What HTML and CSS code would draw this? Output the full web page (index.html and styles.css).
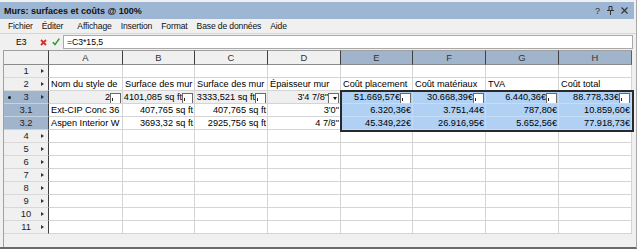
FILE: index.html
```html
<!DOCTYPE html>
<html lang="fr">
<head>
    <meta charset="UTF-8">
    <title>Murs: surfaces et coûts</title>
    <link rel="stylesheet" href="styles.css">
</head>
<body>
<div class="window">
    <div class="titlebar">
        <span class="title">Murs: surfaces et coûts @ 100%</span>
        <span class="tools">
            <span class="help">?</span>
            <svg class="pin" width="7" height="9" viewBox="0 0 7 9">
                <path d="M2 0.5h3v4h-3z M0 4.5h7 M3.5 4.5v4.5" fill="none" stroke="#333" stroke-width="1"/>
            </svg>
            <svg class="close" width="7" height="7" viewBox="0 0 7 7">
                <path d="M0.5 0.5l6 6 M6.5 0.5l-6 6" stroke="#333" stroke-width="1.1"/>
            </svg>
        </span>
    </div>
    <ul class="menubar">
        <li>Fichier</li>
        <li class="wide">Éditer</li>
        <li>Affichage</li>
        <li>Insertion</li>
        <li>Format</li>
        <li>Base de données</li>
        <li>Aide</li>
    </ul>
    <div class="formula">
        <span class="ref">E3</span>
        <svg class="cancel" width="7" height="7" viewBox="0 0 7 7">
            <path d="M1 1l5 5 M6 1l-5 5" stroke="#d3312a" stroke-width="1.8"/>
        </svg>
        <svg class="ok" width="8" height="8" viewBox="0 0 8 8">
            <path d="M0.8 4.2l2.2 2.4 4.3-6" fill="none" stroke="#2f9a2f" stroke-width="1.6"/>
        </svg>
        <div class="input">=C3*15,5</div>
    </div>
    <div class="sheet-wrap">
        <div class="sheet">
            <div class="ch corner"></div>
            <div class="ch">A</div>
            <div class="ch">B</div>
            <div class="ch">C</div>
            <div class="ch">D</div>
            <div class="ch sel">E</div>
            <div class="ch sel">F</div>
            <div class="ch sel">G</div>
            <div class="ch sel last">H</div>

            <div class="rh">1</div>
            <div class="c"></div><div class="c"></div><div class="c"></div><div class="c"></div>
            <div class="c"></div><div class="c"></div><div class="c"></div><div class="c"></div>

            <div class="rh">2</div>
            <div class="c">Nom du style de</div>
            <div class="c">Surface des mur</div>
            <div class="c">Surface des mur</div>
            <div class="c">Épaisseur mur</div>
            <div class="c">Coût placement</div>
            <div class="c">Coût matériaux</div>
            <div class="c">TVA</div>
            <div class="c">Coût total</div>

            <div class="rh sel current">3</div>
            <div class="c num sum box">2</div>
            <div class="c num sum box">4101,085 sq ft</div>
            <div class="c num sum box">3333,521 sq ft</div>
            <div class="c num sum box drop">3'4 7/8"</div>
            <div class="c num hi box">51.669,57€</div>
            <div class="c num hi box">30.668,39€</div>
            <div class="c num hi box">6.440,36€</div>
            <div class="c num hi box">88.778,33€</div>

            <div class="rh sel sub">3.1</div>
            <div class="c">Ext-CIP Conc 36</div>
            <div class="c num">407,765 sq ft</div>
            <div class="c num">407,765 sq ft</div>
            <div class="c num">3'0"</div>
            <div class="c num hi">6.320,36€</div>
            <div class="c num hi">3.751,44€</div>
            <div class="c num hi">787,80€</div>
            <div class="c num hi">10.859,60€</div>

            <div class="rh sel sub">3.2</div>
            <div class="c">Aspen Interior W</div>
            <div class="c num">3693,32 sq ft</div>
            <div class="c num">2925,756 sq ft</div>
            <div class="c num">4 7/8"</div>
            <div class="c num hi">45.349,22€</div>
            <div class="c num hi">26.916,95€</div>
            <div class="c num hi">5.652,56€</div>
            <div class="c num hi">77.918,73€</div>

            <div class="rh">4</div>
            <div class="c"></div><div class="c"></div><div class="c"></div><div class="c"></div>
            <div class="c"></div><div class="c"></div><div class="c"></div><div class="c"></div>
            <div class="rh">5</div>
            <div class="c"></div><div class="c"></div><div class="c"></div><div class="c"></div>
            <div class="c"></div><div class="c"></div><div class="c"></div><div class="c"></div>
            <div class="rh">6</div>
            <div class="c"></div><div class="c"></div><div class="c"></div><div class="c"></div>
            <div class="c"></div><div class="c"></div><div class="c"></div><div class="c"></div>
            <div class="rh">7</div>
            <div class="c"></div><div class="c"></div><div class="c"></div><div class="c"></div>
            <div class="c"></div><div class="c"></div><div class="c"></div><div class="c"></div>
            <div class="rh">8</div>
            <div class="c"></div><div class="c"></div><div class="c"></div><div class="c"></div>
            <div class="c"></div><div class="c"></div><div class="c"></div><div class="c"></div>
            <div class="rh">9</div>
            <div class="c"></div><div class="c"></div><div class="c"></div><div class="c"></div>
            <div class="c"></div><div class="c"></div><div class="c"></div><div class="c"></div>
            <div class="rh">10</div>
            <div class="c"></div><div class="c"></div><div class="c"></div><div class="c"></div>
            <div class="c"></div><div class="c"></div><div class="c"></div><div class="c"></div>
            <div class="rh">11</div>
            <div class="c"></div><div class="c"></div><div class="c"></div><div class="c"></div>
            <div class="c"></div><div class="c"></div><div class="c"></div><div class="c"></div>

            <div class="selection"></div>
        </div>
    </div>
</div>
</body>
</html>
```

FILE: styles.css
```css
* {
    padding: 0;
    margin: 0;
    box-sizing: border-box;
}

ul {
    list-style: none;
}

body {
    background: #ffffff;
    font-family: "Liberation Sans", Arial, sans-serif;
    color: #000;
}

.window {
    width: 637px;
    height: 249px;
    padding-top: 2px;
    background: #f0f0f0;
    border-right: 1px solid #a8a8a8;
    border-bottom: 2px solid #6a6a6a;
    display: flex;
    flex-direction: column;
}

.titlebar {
    height: 17px;
    margin-right: 2px;
    background: #9db6d3;
    display: flex;
    align-items: center;
    justify-content: space-between;
    padding: 0 6px 0 4px;
}

.titlebar .title {
    font-size: 9px;
    font-weight: bold;
    color: #111;
}

.titlebar .tools {
    display: flex;
    align-items: center;
    gap: 7px;
    font-size: 9px;
    color: #333;
}

.menubar {
    height: 15px;
    display: flex;
    align-items: center;
    gap: 9px;
    padding-left: 8px;
    font-size: 8.6px;
    letter-spacing: -0.15px;
    color: #111;
    border-bottom: 1px solid #d6d6d6;
}

.menubar .wide {
    margin-right: 5px;
}

.formula {
    height: 16px;
    display: flex;
    align-items: center;
    padding-right: 3px;
}

.formula .ref {
    width: 40px;
    padding-left: 16px;
    font-size: 8.6px;
}

.formula .ok {
    margin-left: 5px;
}

.formula .input {
    flex: 1;
    height: 14px;
    margin-left: 3px;
    background: #fff;
    border: 1px solid #a9a9a9;
    font-size: 8.6px;
    line-height: 12px;
    padding-left: 3px;
}

.sheet-wrap {
    flex: 1;
    margin-left: 3px;
    border-left: 1px solid #a0a0a0;
}

.sheet {
    position: relative;
    display: grid;
    grid-template-columns: 45px 74px 72px 73px 73px 72px 73px 73px 73px;
    grid-template-rows: 15px;
    grid-auto-rows: 13px;
    width: 628px;
    background: #fff;
    font-size: 9.2px;
}

.ch {
    background: #f0f0f0;
    border-top: 1px solid #a0a0a0;
    border-bottom: 1px solid #8a8a8a;
    border-right: 1px solid #404040;
    text-align: center;
    line-height: 13px;
    font-size: 9.4px;
    color: #333;
}

.ch.sel {
    background: #a0b4cc;
}

.ch.last {
    border-right-color: #606060;
}

.rh {
    position: relative;
    background: #f0f0f0;
    border-bottom: 1px solid #d9d9d9;
    border-right: 1px solid #404040;
    text-align: center;
    line-height: 12px;
    font-size: 9.4px;
    color: #222;
}

.rh::after {
    content: "";
    position: absolute;
    right: 4px;
    top: 4px;
    border-left: 3px solid #333;
    border-top: 2px solid transparent;
    border-bottom: 2px solid transparent;
}

.rh.sel {
    background: #a0b4cc;
    border-bottom-color: #c6d2e0;
}

.rh.sub::after {
    display: none;
}

.rh.current::before {
    content: "";
    position: absolute;
    left: 4px;
    top: 5px;
    width: 3px;
    height: 3px;
    border-radius: 50%;
    background: #111;
}

.c {
    position: relative;
    border-right: 1px solid #d4d4d4;
    border-bottom: 1px solid #d4d4d4;
    line-height: 12px;
    padding: 0 1px 0 2px;
    white-space: nowrap;
    overflow: hidden;
}

.c.num {
    text-align: right;
}

.c.sum {
    background: #efefef;
}

.c.hi {
    background: #b0d1f4;
    border-color: #c4dcf6;
}

.c.box {
    padding-left: 0;
    padding-right: 12px;
}

.c.box::after {
    content: "";
    position: absolute;
    right: 1px;
    top: 2px;
    width: 9px;
    height: 9px;
    background: #fff;
    border: 1px solid #6a6a6a;
    background-image: linear-gradient(#222, #222);
    background-size: 1px 3px;
    background-position: 1px 4px;
    background-repeat: no-repeat;
}

.c.drop::after {
    background-image: none;
}

.c.drop::before {
    content: "";
    position: absolute;
    right: 3px;
    top: 6px;
    z-index: 1;
    border-top: 3px solid #111;
    border-left: 2.5px solid transparent;
    border-right: 2.5px solid transparent;
}

.selection {
    position: absolute;
    left: 336px;
    top: 40px;
    width: 294px;
    height: 42px;
    border: 2px solid #2a2a2a;
    pointer-events: none;
}
```
